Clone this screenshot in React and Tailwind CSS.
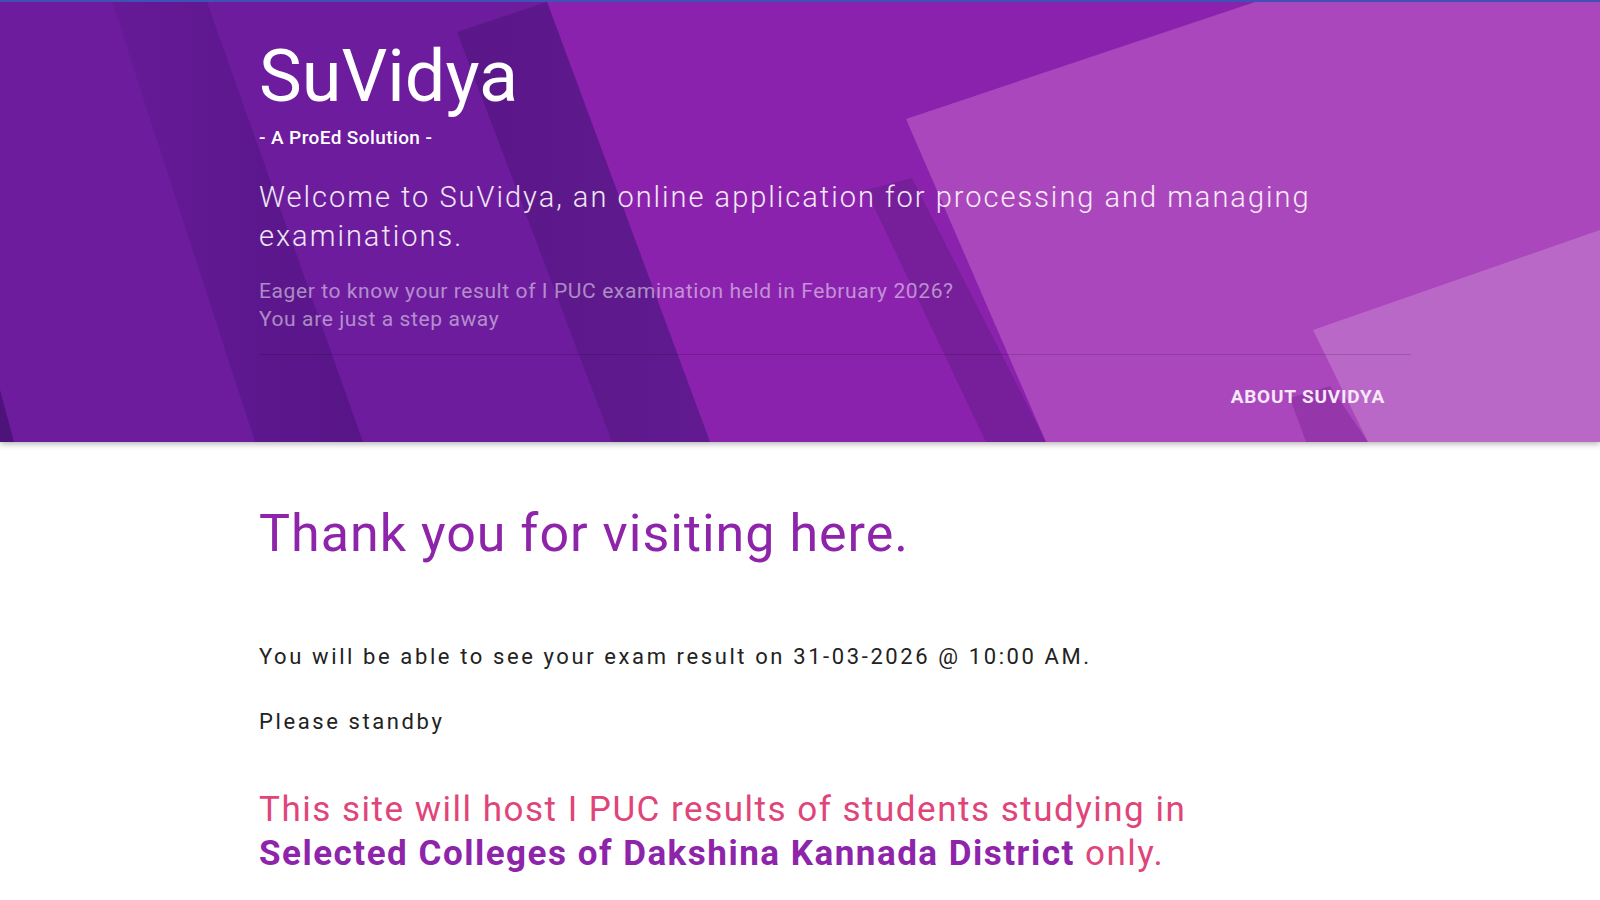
import React from "react";

// background drawing of the header (folded paper shapes)
function HeaderArt() {
  return (
    <svg
      className="absolute inset-0 w-full h-full"
      viewBox="0 0 1600 440"
      preserveAspectRatio="none"
    >
      <defs>
        <linearGradient id="s1" x1="0" y1="0" x2="1" y2="0">
          <stop offset="0" stopColor="#661a97" />
          <stop offset="1" stopColor="#571587" />
        </linearGradient>
        <linearGradient id="s2" x1="0" y1="0" x2="1" y2="0">
          <stop offset="0" stopColor="#5a1788" />
          <stop offset="1" stopColor="#611a90" />
        </linearGradient>
      </defs>
      <rect x="0" y="0" width="1600" height="440" fill="#6c1c9d" />
      <polygon points="547,0 1600,0 1600,440 710,440" fill="#8a22ad" />
      <polygon points="0,388 14,440 0,440" fill="#4e137b" />
      <polygon points="112,0 207,0 363,440 255,440" fill="url(#s1)" />
      <polygon points="457,30 547,0 710,440 612,440" fill="url(#s2)" />
      <polygon points="866,188 912,176 1046,440 986,440" fill="#771e9b" />
      <polygon points="906,117 1255,0 1600,0 1600,440 1046,440" fill="#ab47bc" />
      <polygon points="1290,396 1330,384 1368,440 1306,440" fill="#9537aa" />
      <polygon points="1313,328 1600,228 1600,440 1368,440" fill="#ba68c8" />
    </svg>
  );
}

export default function App() {
  return (
    <div className="min-h-screen bg-white font-['Roboto',sans-serif]">
      {/* header */}
      <header className="relative h-[442px] border-t-2 border-[#3f51b5] bg-[#6c1c9d] shadow-[0_2px_6px_rgba(0,0,0,0.3)]">
        <div className="absolute inset-0 overflow-hidden">
          <HeaderArt />
        </div>
        <div className="relative ml-[259px] w-[1152px] pt-[40px]">
          <h1 className="text-[72px] leading-[70px] font-normal text-white">SuVidya</h1>
          <p className="mt-[14px] text-[19px] leading-[24px] font-medium tracking-[0.4px] text-white">
            - A ProEd Solution -
          </p>
          <p className="mt-[28px] text-[29px] leading-[39px] font-light tracking-[2px] text-white/90">
            Welcome to SuVidya, an online application for processing and managing
            <br />
            examinations.
          </p>
          <p className="mt-[22px] text-[21px] leading-[27.5px] tracking-[0.6px] text-white/50">
            Eager to know your result of I PUC examination held in February 2026?
            <br />
            You are just a step away
          </p>
          <div className="mt-[21px] h-px bg-black/15"></div>
          <div className="flex justify-end pr-[26px] mt-[30px]">
            <a className="text-[19px] leading-[24px] font-bold uppercase tracking-[0.8px] text-[#f6e8f8] cursor-pointer">
              About SuVidya
            </a>
          </div>
        </div>
      </header>

      {/* content */}
      <main className="ml-[259px] w-[1152px] pb-10">
        <h2 className="mt-[62px] text-[52px] leading-[60px] font-normal tracking-[1px] text-[#8e24aa]">
          Thank you for visiting here.
        </h2>
        <p className="mt-[79px] text-[22px] leading-[28px] tracking-[2.6px] text-[#222]">
          You will be able to see your exam result on 31-03-2026 @ 10:00 AM.
        </p>
        <p className="mt-[37px] text-[22px] leading-[28px] tracking-[2.6px] text-[#222]">
          Please standby
        </p>
        <p className="mt-[52px] text-[35px] leading-[44px] tracking-[1.5px] text-[#e0457a]">
          This site will host I PUC results of students studying in
          <br />
          <span className="font-bold text-[#8e24aa]">
            Selected Colleges of Dakshina Kannada District
          </span>{" "}
          only.
        </p>
      </main>
    </div>
  );
}
